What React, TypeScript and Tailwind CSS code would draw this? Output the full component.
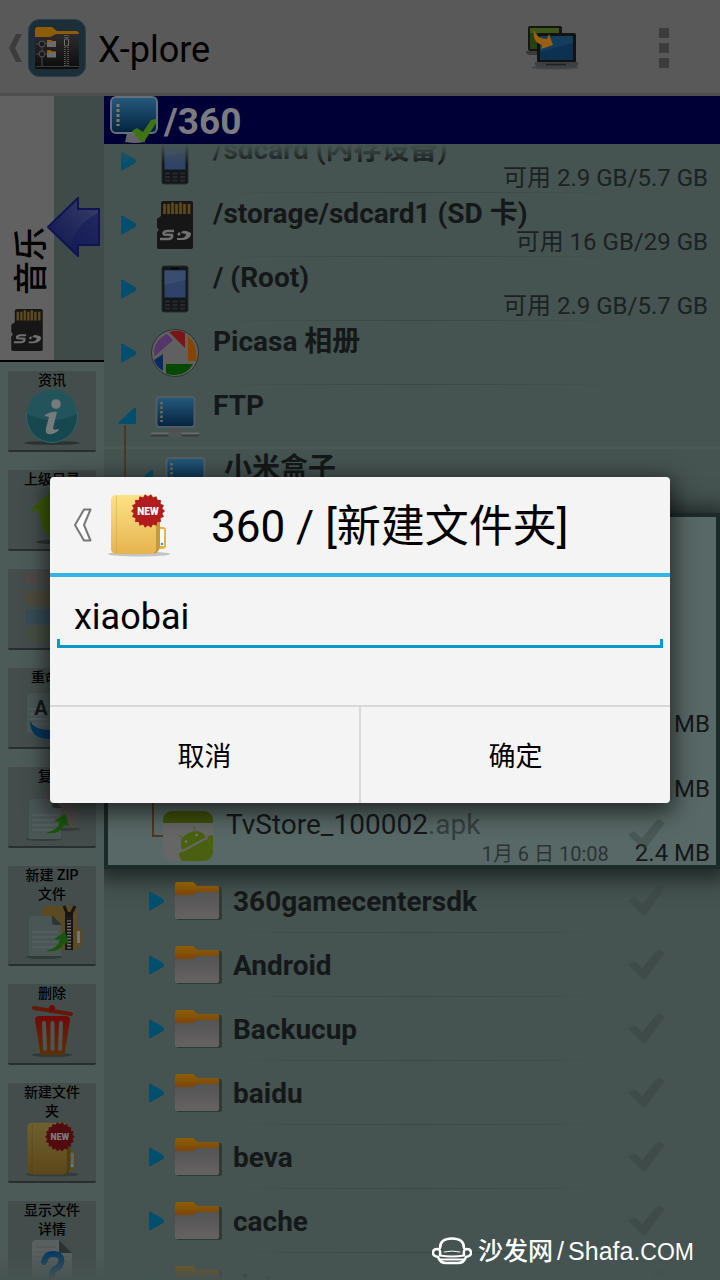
import { useState } from "react";
import type { ReactNode } from "react";

type IconProps = { className?: string };

const BackIcon = ({ className }: IconProps) => (
  <svg viewBox="0 0 14 28" className={className} aria-hidden="true">
    <path d="M8 0h6L7 14l7 14H8L1 14Z" fill="#3c3c3c" />
  </svg>
);

const DialogBackIcon = ({ className }: IconProps) => (
  <svg viewBox="0 0 20 36" className={className} aria-hidden="true">
    <path
      d="M11 2.500h6.500L11 18l6.500 15.500H11L2 18Z"
      fill="#fff"
      stroke="#777"
      strokeWidth="2"
      strokeLinejoin="round"
    />
  </svg>
);

const AppIcon = ({ className }: IconProps) => (
  <svg viewBox="0 0 58 58" className={className} aria-hidden="true">
    <defs>
      <linearGradient id="app-folder" x1="0" y1="0" x2="0" y2="1">
        <stop offset="0" stopColor="#2c2c2c" />
        <stop offset="1" stopColor="#0c0c0c" />
      </linearGradient>
    </defs>
    <rect x=".5" y=".5" width="57" height="57" rx="11" fill="#1c2e37" stroke="#2a3f49" />
    <path d="M7 21V11q0-3 3-3h14l5 4h19q3 0 3 3v9H7Z" fill="#8f5d05" />
    <path d="M7 18h15l6-3h23v33q0 2-2 2H9q-2 0-2-2Z" fill="url(#app-folder)" />
    <path d="M8 47.500h43" stroke="#3a3a3a" />
    <path d="M8 25h11M8 35h11M14 27v6M14 38v9" stroke="#444" strokeWidth="1.200" />
    <circle cx="14" cy="25" r="2.800" fill="#181818" stroke="#484848" strokeWidth="1.200" />
    <circle cx="14" cy="35" r="2.800" fill="#181818" stroke="#484848" strokeWidth="1.200" />
    <path d="M19 21h4l1 1h4v6h-9ZM19 31.500h4l1 1h4v6h-9Z" fill="#6c6c6c" />
    <path d="M19 21h4l1 1h3v1h-8ZM19 31.500h4l1 1h3v1h-8Z" fill="#9a5a08" />
    <path d="M38.500 16v31" stroke="#555" strokeWidth="5" strokeDasharray="1 1" />
    <path d="M38.500 27v20" stroke="#1c1c1c" strokeWidth="1.500" />
    <rect x="36.500" y="20" width="4" height="7" rx="1" fill="#222" stroke="#707070" />
  </svg>
);

const PanesIcon = ({ className }: IconProps) => (
  <svg viewBox="0 0 54 46" className={className} aria-hidden="true">
    <ellipse cx="29" cy="42.500" rx="24" ry="2" fill="#454545" />
    <path d="M0 26h26v3q0 1-2 1H3q-3-1-3-4Z" fill="#3a3a3a" />
    <rect x="2" y="1" width="34" height="25" rx="2" fill="#151515" />
    <rect x="4" y="3" width="29" height="21" fill="#25420f" />
    <path d="M4 3h29v5H4Z" fill="#3d5716" />
    <rect x="11" y="8" width="39" height="30" rx="2" fill="#121212" />
    <rect x="14" y="11" width="33" height="24" fill="#0d3150" />
    <path d="M14 11h33v7L14 27Z" fill="#123d5d" />
    <path d="M9 37h43q1 4-3 5H12q-4-1-3-5Z" fill="#3c4043" />
    <path d="M20 39.500h20" stroke="#222" strokeWidth="1.500" />
    <path d="M8 5q3 9 13 9l2-5 4 11-12 4 1-4Q6 17 8 5Z" fill="#9a6010" />
  </svg>
);

const Monitor = ({ className, check = false }: IconProps & { check?: boolean }) => (
  <svg viewBox="0 0 48 48" className={className} aria-hidden="true">
    <defs>
      <linearGradient id="screen" x1="0" y1="0" x2="0" y2="1">
        <stop offset="0" stopColor="#255a7c" />
        <stop offset="1" stopColor="#03233f" />
      </linearGradient>
    </defs>
    {check ? (
      <>
        <path d="M17 37h15l3 9q-10 2-20 0Z" fill="#636367" />
        <rect x="1" y="1" width="46" height="36" rx="5" fill="url(#screen)" stroke="#66707a" strokeWidth="2" />
        <path d="M8 8v22" stroke="#8a7468" strokeWidth="3" strokeDasharray="3 2" />
        <path d="m22 35 5-3 6 4 8-12 5-1v4L34 46h-3Z" fill="#3e7414" />
      </>
    ) : (
      <>
        <path d="M19 34h10v6H19Z" fill="#4e4e50" />
        <path d="M0 41.500h48" stroke="#686e70" strokeWidth="2" />
        <path d="M0 43.500h48" stroke="#373b3c" strokeWidth="2" />
        <rect x="17" y="40" width="14" height="5" rx="2" fill="#505355" />
        <rect x="5.500" y="5" width="38" height="30" rx="3" fill="url(#screen)" stroke="#525d62" strokeWidth="2" />
        <path d="M10.500 10v20" stroke="#6f6a5e" strokeWidth="2.500" strokeDasharray="2.500 2" />
      </>
    )}
  </svg>
);

const Phone = ({ className }: IconProps) => (
  <svg viewBox="0 0 48 48" className={className} aria-hidden="true">
    <rect x="11" y="1" width="26" height="46" rx="2" fill="#131719" stroke="#252c2d" />
    <path d="M20 3.500h8" stroke="#050505" strokeWidth="1.500" />
    <rect x="13.500" y="5.500" width="21" height="27" fill="#2f4368" />
    <path d="M13.500 5.500h21V15l-21 5Z" fill="#3a4d6e" />
    <path d="M14 36.500h20M14 40h20M14 43.500h20" stroke="#242b2c" strokeWidth="2" strokeDasharray="5 2.500" />
  </svg>
);

const SdCard = ({ className }: IconProps) => (
  <svg viewBox="0 0 38 48" className={className} aria-hidden="true">
    <path
      d="M8 0h27q2 0 2 2v44q0 2-2 2H3q-2 0-2-2V31l2-2-2-3v-8l4-3V2q0-2 3-2Z"
      fill="#161616"
    />
    <path d="M7 2.500h28v11H7Z" fill="#1d1a10" />
    <path d="M8.500 3v10M12.500 3v10M16.500 1.500V13M20.500 3v10M24.500 1.500V13M28.500 3v10M33 3v10" stroke="#5c4b21" strokeWidth="2.700" />
    <path
      d="M18 30h-7q-5 1-3 3.500l8 .5q1 3-3 4H4M24 32l-2 2"
      fill="none"
      stroke="#707070"
      strokeWidth="2.500"
    />
    <path d="M21 39v-2h5q4-1 4-4l-5-1q1-3 5-2 6 1 5 4-2 5-9 5Z" fill="#707070" />
  </svg>
);

const Picasa = ({ className }: IconProps) => (
  <svg viewBox="0 0 48 48" className={className} aria-hidden="true">
    <circle cx="24" cy="24" r="23.500" fill="#606060" stroke="#2c3534" />
    <path d="M3 26Q2 12 16 5l6 6L4 27Z" fill="#54366a" />
    <path d="M18 3q9-3 16 1v15Z" fill="#7a1517" />
    <path d="M37 7q9 7 8.500 25H37Z" fill="#834604" />
    <path d="M15 35h27q-6 11-18 11-6 0-9-2Z" fill="#004a00" />
    <path d="m3 31 9-6v17q-7-4-9-11Z" fill="#0a2c5c" />
  </svg>
);

const Folder = ({ className }: IconProps) => (
  <svg viewBox="0 0 48 40" className={className} aria-hidden="true">
    <defs>
      <linearGradient id="folder-front" x1="0" y1="0" x2="0" y2="1">
        <stop offset="0" stopColor="#545454" />
        <stop offset="1" stopColor="#656262" />
      </linearGradient>
      <linearGradient id="folder-back" x1="0" y1="0" x2="0" y2="1">
        <stop offset="0" stopColor="#8c6006" />
        <stop offset="1" stopColor="#7a3c08" />
      </linearGradient>
    </defs>
    <path d="M2 6h43q2 0 2 2v29q0 2-2 2H2Z" fill="#2f3938" />
    <path d="M0 18V4q0-3 3-3h14q2 0 5 4h20q2 0 2 2v10Z" fill="url(#folder-back)" />
    <path d="M0 16q0-2 2-2h16l3-3h21q2 0 2 2v23q0 2-2 2H2q-2 0-2-2Z" fill="url(#folder-front)" />
  </svg>
);

const Apk = ({ className }: IconProps) => (
  <svg viewBox="0 0 50 50" className={className} aria-hidden="true">
    <defs>
      <clipPath id="apk-clip">
        <rect width="50" height="50" rx="9" />
      </clipPath>
    </defs>
    <g clipPath="url(#apk-clip)">
      <path d="M0 0h50v50H0Z" fill="#656666" />
      <path d="M0 0h50v12H0Z" fill="#3e5009" />
      <path d="M19 39q-4-14 9-18 10-3 15 5Z" fill="#496010" />
      <path d="m20 41 24-13 8 14v10H27Z" fill="#496010" />
      <path d="m20 27-4-3M31 20v-5" stroke="#496010" strokeWidth="1" />
      <rect x="16" y="41" width="6" height="14" rx="3" transform="rotate(-28 19 44)" fill="#496010" />
      <rect x="45" y="24" width="6" height="16" rx="3" transform="rotate(-28 48 28)" fill="#496010" />
      <circle cx="23" cy="30.500" r="1.300" fill="#777" />
      <circle cx="33.500" cy="24" r="1.300" fill="#777" />
    </g>
  </svg>
);

const Caret = ({ className }: IconProps) => (
  <svg viewBox="0 0 16 20" className={className} aria-hidden="true">
    <path d="M0 2q0-2 2-1l12 7q2 2 0 4L2 19q-2 1-2-1Z" fill="#004f6e" />
  </svg>
);

const CaretOpen = ({ className }: IconProps) => (
  <svg viewBox="0 0 18 18" className={className} aria-hidden="true">
    <path d="M16 1q2-1 2 1v13q0 2-2 2H1q-1-1 0-2Z" fill="#004f6e" />
  </svg>
);

const Tick = ({ className }: IconProps) => (
  <svg viewBox="0 0 38 32" className={className} aria-hidden="true">
    <path d="m0 16 6-4 8 7L30 0l7 4-19 25q-2 2-4 0Z" fill="#37413f" fillOpacity=".4" />
  </svg>
);

const LeftArrow = ({ className }: IconProps) => (
  <svg viewBox="0 0 53 60" className={className} aria-hidden="true">
    <defs>
      <linearGradient id="left-arrow" x1="0" y1="1" x2="1" y2="0">
        <stop offset="0" stopColor="#0b1450" />
        <stop offset="1" stopColor="#3a3e66" />
      </linearGradient>
    </defs>
    <path d="M1 30 31 1v11h21v36H31v11Z" fill="url(#left-arrow)" stroke="#0e1550" strokeWidth="2" />
    <path d="M24 50q3-22 27-34v31H30v9Z" fill="#10185a" fillOpacity=".5" />
  </svg>
);

// The dialog shows the folder in full colour, the toolbar in its dimmed one.
const NewFolder = ({ className, dim = false }: IconProps & { dim?: boolean }) => {
  const c = dim
    ? { a: "#6f602f", b: "#5c4819", edge: "#503d13", tab: "#606666", red: "#520c0f", text: "#7c7c7c", shadow: "#333d3c" }
    : { a: "#fde286", b: "#e5b44d", edge: "#c69a3a", tab: "#ffffff", red: "#b21c1c", text: "#ffffff", shadow: "#c4c4c4" };
  const id = dim ? "nf-dim" : "nf";
  const points = Array.from({ length: 36 }, (_, i) => {
    const r = i % 2 ? 14.5 : 17;
    const t = (i * Math.PI) / 18;
    return `${(41 + r * Math.cos(t)).toFixed(1)},${(18 + r * Math.sin(t)).toFixed(1)}`;
  }).join(" ");
  return (
    <svg viewBox="0 0 64 64" className={className} aria-hidden="true">
      <defs>
        <linearGradient id={id} x1="0" y1="0" x2="0" y2="1">
          <stop offset="0" stopColor={c.a} />
          <stop offset="1" stopColor={c.b} />
        </linearGradient>
      </defs>
      <ellipse cx="32" cy="61" rx="31" ry="2.500" fill={c.shadow} />
      <path d="M50 34h6q3 0 3 3v16q0 3-4 3h-5Z" fill={c.b} />
      <rect x="53" y="36" width="4" height="17" rx="1" fill={c.tab} />
      <circle cx="55" cy="51" r="1.300" fill="#2a9bd8" />
      <path d="M47 4q6 2 6 8v40q0 7-6 9Z" fill={c.edge} />
      <rect x="4" y="2" width="45" height="59" rx="5" fill={`url(#${id})`} />
      <path d="M9.500 3v57" stroke={c.edge} strokeOpacity=".4" />
      <polygon points={points} fill={c.red} />
      <text x="41" y="21.500" textAnchor="middle" fontSize="10" fontWeight="900" fontFamily="Roboto, sans-serif" fill={c.text}>
        NEW
      </text>
    </svg>
  );
};

const InfoArt = () => (
  <svg viewBox="0 0 60 56" className="h-14 w-15" aria-hidden="true">
    <ellipse cx="30" cy="53" rx="28" ry="2" fill="#2a3332" />
    <circle cx="30" cy="27" r="25.500" fill="#17484f" stroke="#2e666d" />
    <path d="M5 24a25 25 0 0 1 50 0q-24 12-50 0Z" fill="#23545b" />
    <circle cx="34" cy="14" r="4.800" fill="#777b7c" />
    <path d="M23 25q7-4 12-3l-4 16q0 3 5 1l1 1q-5 5-11 4-3-1-2-6l3-11-4-1Z" fill="#777b7c" />
  </svg>
);

const UpArt = () => (
  <svg viewBox="0 0 60 56" className="h-14 w-15" aria-hidden="true">
    <ellipse cx="32" cy="53" rx="18" ry="2" fill="#2a3332" />
    <path d="M30 1 52 22H42q1 18-12 28-13-10-12-28H8Z" fill="#3d5a06" />
  </svg>
);

const DiskArt = () => (
  <svg viewBox="0 0 60 56" className="h-14 w-15" aria-hidden="true">
    <rect x="3" y="3" width="54" height="15" rx="4" fill="#4c4b3c" />
    <rect x="3" y="21" width="54" height="15" rx="4" fill="#364c55" />
    <rect x="3" y="39" width="54" height="15" rx="4" fill="#435040" />
  </svg>
);

const Sheet = () => (
  <>
    <path d="M5 10q0-4 4-4h20l8 8v32H5Z" fill="#4a5555" />
    <path d="M28 5v7q0 3 3 3h7Z" fill="#2b3635" />
    <path d="M8 22h26M8 27h26M8 32h26M8 37h26" stroke="#566060" strokeWidth="1.500" />
  </>
);

const RenameArt = () => (
  <svg viewBox="0 0 60 56" className="h-14 w-15" aria-hidden="true">
    <Sheet />
    <text x="19" y="28" textAnchor="middle" fontSize="20" fontWeight="700" fontFamily="Roboto, sans-serif" fill="#161a1a">
      A
    </text>
    <path d="M8 34q5 10 22 9v-6l14 10-14 9v-4Q8 53 8 34Z" fill="#06355c" />
  </svg>
);

const GreenArrow = () => (
  <path d="M24 47q12-3 14-11l-6-1 11-7 4 12-5-1q-4 10-18 8Z" fill="#19550b" />
);

const CopyArt = () => (
  <svg viewBox="0 0 60 56" className="h-14 w-15" aria-hidden="true">
    <ellipse cx="36" cy="43" rx="22" ry="2" fill="#333d3c" />
    <path d="M22 6q0-4 4-4h20l8 8v32H22Z" fill="#4e4b4b" />
    <ellipse cx="22" cy="53" rx="18" ry="2" fill="#333d3c" />
    <g transform="translate(2 7)">
      <Sheet />
    </g>
    <GreenArrow />
  </svg>
);

const ZipArt = () => (
  <svg viewBox="0 0 60 56" className="h-14 w-15" aria-hidden="true">
    <path d="M20 6q0-4 4-4h27q4 0 4 4v40H20Z" fill="#5c4b22" />
    <path d="M53 24h5q2 1 2 3v13q0 2-3 2h-4Z" fill="#5c4b22" />
    <rect x="55" y="27" width="3" height="12" fill="#737777" />
    <path d="M47 8v38" stroke="#161616" strokeWidth="8" />
    <path d="M47 10v35" stroke="#6c6c6c" strokeWidth="4" strokeDasharray="1.500 1.500" />
    <path d="m42 2 5 12 6-12" fill="none" stroke="#161616" strokeWidth="3" />
    <ellipse cx="22" cy="53" rx="18" ry="2" fill="#2f3938" />
    <g transform="translate(2 6)">
      <Sheet />
    </g>
    <GreenArrow />
  </svg>
);

const TrashArt = () => (
  <svg viewBox="0 0 60 56" className="h-14 w-15" aria-hidden="true">
    <defs>
      <linearGradient id="trash" x1="0" y1="0" x2="0" y2="1">
        <stop offset="0" stopColor="#700a08" />
        <stop offset="1" stopColor="#5c3008" />
      </linearGradient>
    </defs>
    <ellipse cx="30" cy="52" rx="20" ry="2" fill="#2f3938" />
    <path d="m12 5 37 6" stroke="#661708" strokeWidth="4" strokeLinecap="round" />
    <circle cx="30" cy="5" r="3" fill="#700a08" />
    <path d="M13 17q0-4 4-4h27q4 0 4 4l-5 32q0 3-4 3H22q-4 0-4-3Z" fill="url(#trash)" />
    <path d="m22 20 1 26M30.500 20v26M39 20l-1 26" stroke="#4b5655" strokeWidth="4" strokeLinecap="round" />
  </svg>
);

const DetailsArt = () => (
  <svg viewBox="0 0 60 56" className="h-14 w-15" aria-hidden="true">
    <path d="M10 5q0-4 4-4h23l13 13v42H10Z" fill="#5a5f5f" />
    <path d="M37 1v13h13Z" fill="#2b3232" />
    <path d="M14 8h20M14 13h20M14 18h32M14 23h32M14 28h32" stroke="#4f5757" />
    <path d="M22 23q2-9 10-8 9 1 7 9-1 4-6 6-3 2-3 6" fill="none" stroke="#073b63" strokeWidth="6" strokeLinecap="round" />
    <circle cx="30" cy="45" r="4" fill="#073b63" />
  </svg>
);

const SofaLogo = ({ className }: IconProps) => (
  <svg viewBox="0 0 40 28" className={className} aria-hidden="true">
    <g fill="none" stroke="#fff" strokeWidth="2.500" strokeLinecap="round">
      <path d="M8 11Q8 1.500 20 1.500T32 11" />
      <path d="M8 18q1-6-3-6-4 0-4 4 0 3 5 4 2 6 8 6h12q6 0 8-6 5-1 5-4 0-4-4-4-4 0-3 6" />
      <path d="M8 18.500q12 2 24 0M8 22.500h24" strokeWidth="2" />
      <path d="M12 15q8-2 16 0" strokeWidth="1" />
    </g>
  </svg>
);

const tools: { label: string; art: ReactNode; disabled?: boolean }[] = [
  { label: "资讯", art: <InfoArt /> },
  { label: "上级目录", art: <UpArt /> },
  { label: "磁盘地图", art: <DiskArt />, disabled: true },
  { label: "重命名", art: <RenameArt /> },
  { label: "复制", art: <CopyArt /> },
  { label: "新建 ZIP 文件", art: <ZipArt /> },
  { label: "删除", art: <TrashArt /> },
  { label: "新建文件夹", art: <NewFolder dim className="h-14 w-14" /> },
  { label: "显示文件详情", art: <DetailsArt /> },
];

const volumes = [
  { name: "/sdcard (内存设备)", free: "可用 2.9 GB/5.7 GB", icon: <Phone className="size-12" /> },
  { name: "/storage/sdcard1 (SD 卡)", free: "可用 16 GB/29 GB", icon: <SdCard className="h-12 w-[38px]" /> },
  { name: "/ (Root)", free: "可用 2.9 GB/5.7 GB", icon: <Phone className="size-12" /> },
  { name: "Picasa 相册", free: "", icon: <Picasa className="size-12" /> },
];

const folders = ["360gamecentersdk", "Android", "Backucup", "baidu", "beva", "cache", "data"];

const Divider = () => (
  <div className="mr-[90px] ml-[100px] h-px shrink-0 bg-linear-to-r from-transparent via-[#394644] to-transparent" />
);

function VolumeRow({ name, free, icon }: (typeof volumes)[number]) {
  return (
    <li className="flex h-16 shrink-0 flex-col">
      <div className="flex flex-1 items-center pr-3 pl-[17px]">
        <Caret className="h-5 w-4" />
        <span className="ml-[14px] flex w-12 justify-center">{icon}</span>
        <div className="relative ml-[14px] h-[63px] flex-1 pt-[5px]">
          <span className="block text-[28px] leading-8 font-bold">{name}</span>
          <span className="absolute right-0 -bottom-[2px] text-2xl leading-8 text-[#1c2221]">{free}</span>
        </div>
      </div>
      <Divider />
    </li>
  );
}

function ToolButton({ label, art, disabled }: (typeof tools)[number]) {
  return (
    <button
      type="button"
      disabled={disabled}
      className={`flex w-full shrink-0 flex-col items-center rounded-xs border-t border-b-2 border-t-[#505b59] border-b-[#27302f] bg-[#434e4c] px-3 pb-1 text-sm leading-[19px] font-medium ${disabled ? "text-[#574848]" : "text-black"}`}
    >
      <span>{label}</span>
      {art}
    </button>
  );
}

function NewFolderDialog() {
  const [name, setName] = useState("xiaobai");

  return (
    <div className="absolute inset-0 z-20 flex items-center justify-center px-[50px]">
      <div
        role="dialog"
        aria-labelledby="dialog-title"
        className="w-full rounded-sm bg-[#f4f4f4] text-black shadow-[0_6px_22px_4px_rgba(0,0,0,0.6)]"
      >
        <header className="flex h-25 items-center border-b-4 border-[#33b5e5] pl-[23px]">
          <button type="button" aria-label="返回">
            <DialogBackIcon className="h-9 w-5" />
          </button>
          <NewFolder className="ml-[14px] size-16" />
          <h2 id="dialog-title" className="ml-10 pt-1 text-[44px] leading-[60px] whitespace-nowrap">
            360 / [新建文件夹]
          </h2>
        </header>
        <div className="px-[7px] pt-2 pb-[57px]">
          <input
            aria-label="文件夹名称"
            value={name}
            onChange={(e) => setName(e.target.value)}
            className="block h-[60px] w-full px-[17px] pt-1 text-4xl outline-none"
          />
          <div className="-mt-[6px] h-[9px] border-x-3 border-b-3 border-[#0099cc]" />
        </div>
        <div className="flex border-t-2 border-[#d8d8d8] text-[27px] leading-9">
          <button type="button" className="flex-1 border-r border-[#d8d8d8] pt-8 pb-7">
            取消
          </button>
          <button type="button" className="flex-1 border-l border-[#d8d8d8] pt-8 pb-7">
            确定
          </button>
        </div>
      </div>
    </div>
  );
}

export default function App() {
  return (
    <div className="relative flex h-screen flex-col overflow-hidden bg-[#455351] font-[Roboto,'Noto_Sans_CJK_SC',sans-serif] text-[#141818]">
      <header className="flex h-24 shrink-0 items-center border-b-3 border-[#4f4f4f] bg-[#595959] pt-[3px] pl-2">
        <button type="button" aria-label="返回" className="flex items-center">
          <BackIcon className="h-7 w-[14px]" />
          <AppIcon className="ml-[6px] size-[58px]" />
        </button>
        <h1 className="ml-3 flex-1 pt-1 text-4xl text-black">X-plore</h1>
        <button type="button" aria-label="切换窗格">
          <PanesIcon className="h-[46px] w-[54px]" />
        </button>
        <button type="button" aria-label="更多" className="mr-[51px] ml-[79px] flex flex-col gap-[5px]">
          <span className="size-[10px] bg-[#3c3c3c]" />
          <span className="size-[10px] bg-[#3c3c3c]" />
          <span className="size-[10px] bg-[#3c3c3c]" />
        </button>
      </header>

      <div className="flex min-h-0 flex-1">
        <aside className="flex w-26 shrink-0 flex-col bg-[#4c5a58]">
          <div className="relative flex h-[266px] shrink-0 border-b-2 border-black bg-[#3e4b49]">
            <div className="flex w-[54px] flex-col items-center justify-end bg-[#616161] pb-[9px]">
              <span className="ml-2 rotate-180 text-[34px] leading-10 font-medium text-black [text-orientation:sideways] [writing-mode:vertical-rl]">
                音乐
              </span>
              <SdCard className="mt-[14px] h-[42px] w-[34px]" />
            </div>
            <LeftArrow className="absolute top-[101px] right-1 h-15 w-[53px]" />
          </div>
          <nav className="flex min-h-0 flex-1 flex-col gap-[17px] overflow-hidden px-2 pt-2">
            {tools.map((t) => (
              <ToolButton key={t.label} {...t} />
            ))}
          </nav>
        </aside>

        <main className="flex min-w-0 flex-1 flex-col">
          <div className="flex h-12 shrink-0 items-center bg-[#000037] pl-[6px] text-[37px] font-bold text-[#7c7c80]">
            <Monitor check className="size-12" />
            <span className="ml-[6px] pt-1">/360</span>
          </div>

          <div className="relative min-h-0 flex-1 overflow-hidden">
            <ul className="-mt-[15px] flex flex-col">
              {volumes.map((v) => (
                <VolumeRow key={v.name} {...v} />
              ))}
              <li className="flex h-16 shrink-0 items-center border-b-3 border-[#4a5856] pl-[14px]">
                <CaretOpen className="size-[18px]" />
                <Monitor className="ml-[15px] size-12" />
                <span className="ml-[14px] self-start pt-[5px] text-[28px] leading-8 font-bold">FTP</span>
              </li>
              <li className="flex h-16 shrink-0 items-start pt-1 pl-5">
                <span className="-mt-7 h-[88px] w-[2px] bg-[#50361f]" />
                <CaretOpen className="mt-4 ml-[9px] size-[18px]" />
                <Monitor className="ml-2 size-12" />
                <span className="ml-[15px] text-[28px] leading-8 font-bold">小米盒子</span>
              </li>
              <li className="flex min-h-[356px] shrink-0 flex-col border-4 border-[#1c2a29] bg-[#586866] shadow-[0_2px_20px_8px_rgba(20,28,28,0.8)]">
                <ul className="mt-auto text-2xl leading-7">
                  {["MB", "MB"].map((size, i) => (
                    <li key={i} className="flex h-[65px] items-end justify-end pr-[6px]">
                      <span className="-mb-[2px]">{size}</span>
                    </li>
                  ))}
                  <li className="relative flex h-[64px] pl-11">
                    <span className="h-9 w-[11px] border-b-2 border-l-2 border-[#50361f]" />
                    <Apk className="mt-[10px] size-[50px]" />
                    <Tick className="absolute top-[18px] right-[50px] h-8 w-[38px]" />
                    <div className="ml-[13px] flex-1 pr-[6px]">
                      <div className="pt-2 text-[28px] leading-8">
                        TvStore_100002<span className="text-[#34403e]">.apk</span>
                      </div>
                      <div className="-mt-[2px] flex items-baseline justify-end leading-7">
                        <span className="text-xl leading-7 text-[#2b3433]">1月 6 日 10:08</span>
                        <span className="ml-[26px]">2.4 MB</span>
                      </div>
                    </div>
                  </li>
                </ul>
              </li>
              {folders.map((f) => (
                <li key={f} className="flex h-16 shrink-0 flex-col">
                  <div className="flex flex-1 items-center pl-[45px]">
                    <Caret className="h-5 w-4" />
                    <Folder className="ml-[10px] h-10 w-12" />
                    <span className="ml-[10px] flex-1 pt-[3px] text-[28px] leading-8 font-bold">{f}</span>
                    <Tick className="mr-[54px] h-8 w-[38px]" />
                  </div>
                  <Divider />
                </li>
              ))}
            </ul>
            <div className="absolute inset-x-0 top-0 h-5 bg-linear-to-b from-[#455351] to-transparent" />
          </div>
        </main>
      </div>
      <div className="absolute inset-x-0 bottom-0 h-7 bg-linear-to-t from-[#455351] to-transparent" />

      <NewFolderDialog />

      <div className="absolute right-[26px] bottom-[14px] z-10 flex items-center text-white">
        <SofaLogo className="h-7 w-10" />
        <span className="ml-[6px] pt-[2px] font-['Liberation_Sans','Noto_Sans_CJK_SC',sans-serif] text-[25px] leading-7 font-medium whitespace-nowrap">
          沙发网<span className="mx-1">/</span>Shafa.<span className="text-[23px]">COM</span>
        </span>
      </div>
    </div>
  );
}
